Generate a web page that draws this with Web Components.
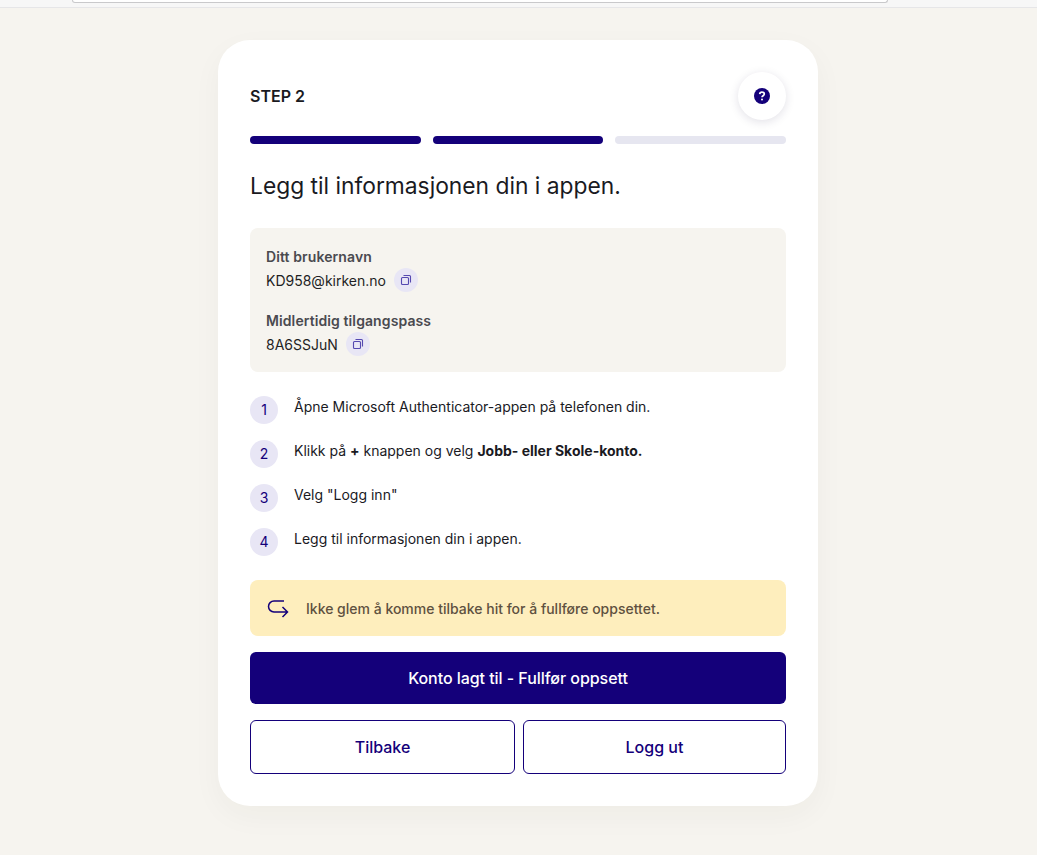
<!DOCTYPE html>
<html lang="no"><head><meta charset="utf-8"><title>Step 2</title>
<style>
html,body{margin:0;padding:0}
body{background:#f6f4ef;font-family:Inter,"Liberation Sans",sans-serif;color:#1a1a1f;height:855px;overflow:hidden}
</style></head><body>
<browser-strip></browser-strip>
<setup-page>
  <setup-card>
    <step-header label="STEP 2"></step-header>
    <step-progress></step-progress>
    <h-title>Legg til informasjonen din i appen.</h-title>
    <info-box>
      <info-field label="Ditt brukernavn" value="KD958@kirken.no"></info-field>
      <info-field label="Midlertidig tilgangspass" value="8A6SSJuN"></info-field>
    </info-box>
    <step-list>
      <step-item n="1">Åpne Microsoft Authenticator-appen på telefonen din.</step-item>
      <step-item n="2">Klikk på <b>+</b> knappen og velg <b>Jobb- eller Skole-konto.</b></step-item>
      <step-item n="3">Velg "Logg inn"</step-item>
      <step-item n="4">Legg til informasjonen din i appen.</step-item>
    </step-list>
    <notice-box>Ikke glem å komme tilbake hit for å fullføre oppsettet.</notice-box>
    <primary-button>Konto lagt til - Fullfør oppsett</primary-button>
    <button-row>
      <outline-button>Tilbake</outline-button>
      <outline-button>Logg ut</outline-button>
    </button-row>
  </setup-card>
</setup-page>
<script>
const NAVY='#14007a';
function def(name,css,html){
  customElements.define(name,class extends HTMLElement{
    connectedCallback(){
      if(this.shadowRoot)return;
      const r=this.attachShadow({mode:'open'});
      const h=typeof html==='function'?html(this):html;
      r.innerHTML='<style>'+css+'</style>'+h;
    }
  });
}
def('browser-strip',`
:host{display:block;height:7px;background:#f7f7f7;border-bottom:1px solid #e6e6e8;padding:0 149px 0 72px}
.bar{height:3px;background:#fff;border:1px solid #c9c9cb;border-top:0;border-radius:0 0 8px 8px;box-sizing:border-box}
`,`<div class="bar"></div>`);
def('setup-page',`:host{display:flex;justify-content:center;padding:32px 1px 0 0}`,`<slot></slot>`);
def('setup-card',`
:host{display:flex;flex-direction:column;box-sizing:border-box;width:600px;height:766px;background:#fff;border-radius:32px;padding:32px;box-shadow:0 10px 30px rgba(60,50,30,.04)}
`,`<slot></slot>`);
def('step-header',`
:host{display:flex;align-items:center;justify-content:space-between;height:48px}
.l{font-size:16px;font-weight:600;color:#1a1a1f}
.q{width:48px;height:48px;border-radius:50%;background:#fff;box-shadow:0 2px 10px rgba(30,20,70,.13);display:flex;align-items:center;justify-content:center}
svg{display:block}
`,e=>`<span class="l">${e.getAttribute('label')}</span><span class="q"><svg width="16" height="16" viewBox="0 0 16 16"><circle cx="8" cy="8" r="8" fill="${NAVY}"/><path d="M5.7 6.2A2.3 2.2 0 0 1 8 4.2c1.3 0 2.3.8 2.3 1.9 0 1.6-2.3 1.7-2.3 3.1" fill="none" stroke="#fff" stroke-width="1.7"/><circle cx="8" cy="11.6" r="1" fill="#fff"/></svg></span>`);
def('step-progress',`
:host{display:grid;grid-template-columns:repeat(3,1fr);gap:12px;margin-top:16px;height:8px}
i{display:block;border-radius:4px;background:${NAVY}}
i.off{background:#e6e6f0}
`,`<i></i><i></i><i class="off"></i>`);
def('h-title',`:host{display:block;margin-top:28px;font-size:22.8px;line-height:28px;font-weight:400;color:#1a1a1f}`,`<slot></slot>`);
def('info-box',`
:host{display:flex;flex-direction:column;gap:19px;margin-top:28px;height:144px;box-sizing:border-box;padding:19px 16px 15px;background:#f6f4ef;border-radius:8px}
`,`<slot></slot>`);
def('info-field',`
:host{display:block}
.l{font-size:14px;line-height:20px;height:20px;font-weight:600;letter-spacing:.1px;color:#4a4a4f}
.v{display:flex;align-items:center;gap:8px;margin-top:1px;height:24px;font-size:14px;color:#1f1f24}
.c{width:24px;height:24px;border-radius:50%;background:#e8e6f5;display:flex;align-items:center;justify-content:center}
svg{display:block}
`,e=>`<div class="l">${e.getAttribute('label')}</div><div class="v"><span>${e.getAttribute('value')}</span><span class="c"><svg width="12" height="12" viewBox="0 0 12 12" fill="none" stroke="#5549b0" stroke-width="1.1"><rect x="1.5" y="3.5" width="7" height="7" rx="1"/><path d="M3.5 1.5h6a1 1 0 0 1 1 1v6"/></svg></span></div>`);
def('step-list',`:host{display:flex;flex-direction:column;gap:16px;margin-top:24px}`,`<slot></slot>`);
def('step-item',`
:host{display:flex;gap:16px;height:28px;font-size:14px;line-height:20px;color:#1a1a1f}
.n{flex:none;width:28px;height:28px;border-radius:50%;background:#e8e6f5;color:${NAVY};display:flex;align-items:center;justify-content:center;font-size:14px}
.t{padding-top:1px}
`,e=>`<span class="n">${e.getAttribute('n')}</span><span class="t"><slot></slot></span>`);
def('notice-box',`
:host{display:flex;align-items:center;gap:16px;margin-top:24px;height:56px;box-sizing:border-box;padding:0 16px;background:#feeebd;border-radius:8px;font-size:14px;font-weight:500;color:#5e5140}
svg{display:block;flex:none}
`,`<svg width="24" height="24" viewBox="0 0 24 24" fill="none" stroke="${NAVY}" stroke-width="1.5"><path d="M18 5H8a5 5 0 0 0 0 11h13.5M16.5 11l5 5-5 5"/></svg><span><slot></slot></span>`);
def('primary-button',`
:host{display:flex;align-items:center;justify-content:center;margin-top:16px;height:52px;background:${NAVY};color:#fff;border-radius:6px;font-size:16px;font-weight:500;letter-spacing:-.05px}
`,`<slot></slot>`);
def('button-row',`:host{display:grid;grid-template-columns:265px 263px;gap:8px;margin-top:16px}`,`<slot></slot>`);
def('outline-button',`
:host{display:flex;align-items:center;justify-content:center;height:54px;box-sizing:border-box;border:1px solid ${NAVY};color:${NAVY};border-radius:6px;background:#fff;font-size:16px;font-weight:500}
`,`<slot></slot>`);
</script>
</body></html>
